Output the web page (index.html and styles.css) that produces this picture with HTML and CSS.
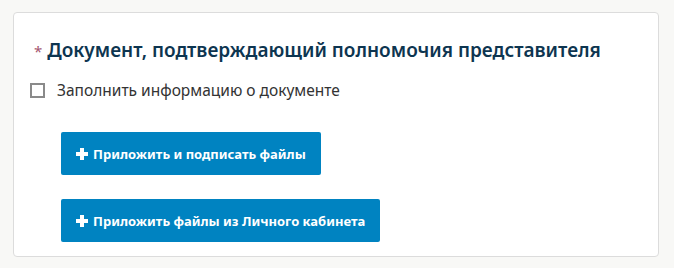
FILE: index.html
```html
<!DOCTYPE html>
<html lang="ru">
<head>
<meta charset="utf-8">
<link rel="stylesheet" href="styles.css">
</head>
<body>
<div class="card">
  <h2 class="title"><span class="req">*</span>Документ, подтверждающий полномочия представителя</h2>
  <label class="check">
    <span class="box"></span>
    <span class="check-label">Заполнить информацию о документе</span>
  </label>
  <div class="actions">
    <button class="btn"><svg class="plus" viewBox="0 0 12 12" width="12" height="12"><rect x="4" y="0" width="4" height="12" fill="#fff"/><rect x="0" y="4" width="12" height="4" fill="#fff"/></svg>Приложить и подписать файлы</button>
    <button class="btn"><svg class="plus" viewBox="0 0 12 12" width="12" height="12"><rect x="4" y="0" width="4" height="12" fill="#fff"/><rect x="0" y="4" width="12" height="4" fill="#fff"/></svg>Приложить файлы из Личного кабинета</button>
  </div>
</div>
</body>
</html>
```
FILE: styles.css
```css
html, body {
  margin: 0;
  padding: 0;
  background: #f8f8f6;
}
body {
  padding: 12px 15px 11px 13px;
  font-family: "Noto Sans", "Open Sans", sans-serif;
}
.card {
  background: #fff;
  border: 1px solid #dcdcdc;
  border-radius: 4px;
  padding: 25px 0 15px 16px;
  height: 245px;
  box-sizing: border-box;
}
.title {
  margin: 0;
  font-size: 19px;
  font-weight: 600;
  color: #0d3550;
  line-height: 24px;
  display: flex;
  align-items: baseline;
}
.req {
  color: #a45672;
  font-weight: 400;
  font-size: 15px;
  margin-right: 5px;
  margin-left: 4px;
}
.check {
  display: flex;
  align-items: center;
  margin-top: 16px;
  gap: 12px;
}
.box {
  width: 15px;
  height: 15px;
  border: 2px solid #8a8a8a;
  box-sizing: border-box;
}
.check-label {
  font-size: 15.5px;
  color: #333;
}
.actions {
  display: flex;
  flex-direction: column;
  align-items: flex-start;
  gap: 24px;
  margin-top: 31px;
  padding-left: 31px;
}
.btn {
  display: flex;
  align-items: center;
  height: 43px;
  padding: 0 15px;
  background: #0083c1;
  border: none;
  border-radius: 2px;
  color: #fff;
  font-family: "Noto Sans", "Open Sans", sans-serif;
  font-size: 13px;
  font-weight: 700;
  gap: 5px;
}
.plus {
  display: block;
}
```
